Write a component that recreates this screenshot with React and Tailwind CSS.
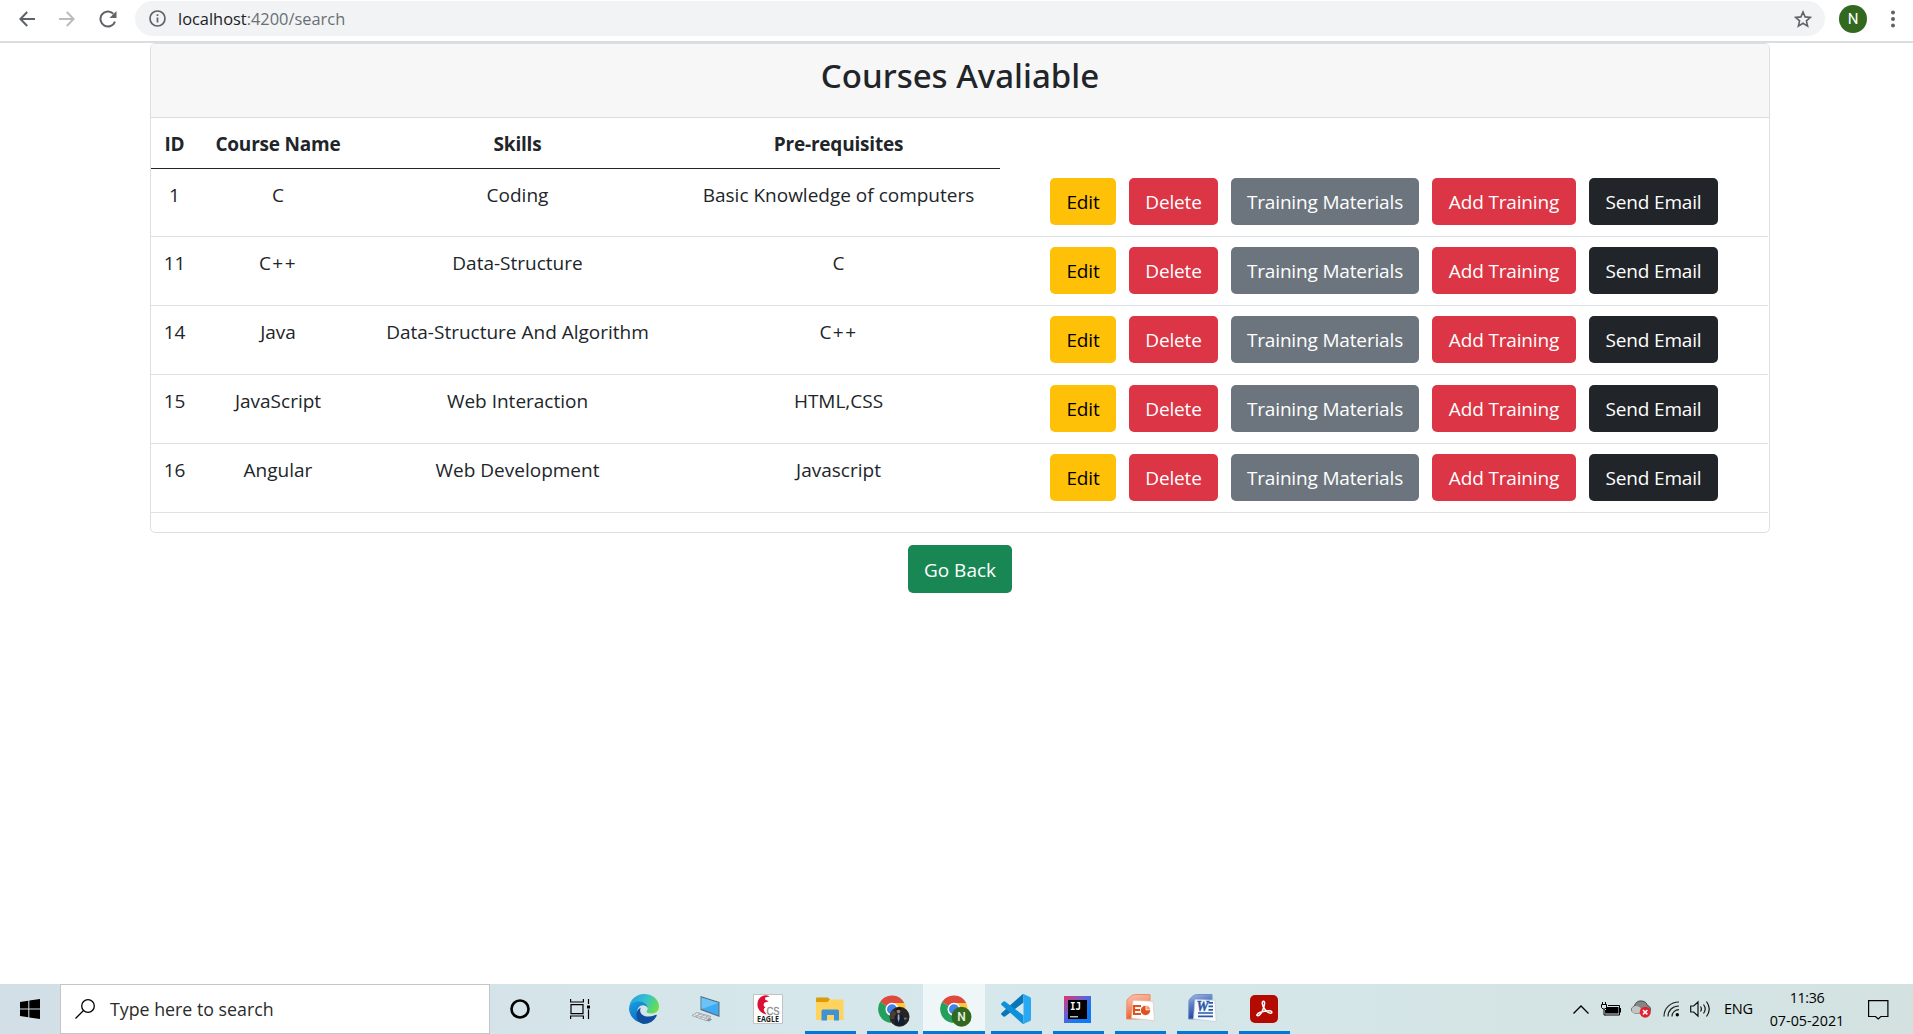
import React from "react";

const courses = [
  { id: 1, name: "C", skills: "Coding", pre: "Basic Knowledge of computers" },
  { id: 11, name: "C++", skills: "Data-Structure", pre: "C" },
  { id: 14, name: "Java", skills: "Data-Structure And Algorithm", pre: "C++" },
  { id: 15, name: "JavaScript", skills: "Web Interaction", pre: "HTML,CSS" },
  { id: 16, name: "Angular", skills: "Web Development", pre: "Javascript" },
];

const actions = [
  { label: "Edit", cls: "w-[66px] bg-[#ffc107] text-black" },
  { label: "Delete", cls: "w-[89px] bg-[#dc3545] text-white" },
  { label: "Training Materials", cls: "w-[188px] bg-[#6c757d] text-white" },
  { label: "Add Training", cls: "w-[144px] bg-[#dc3545] text-white" },
  { label: "Send Email", cls: "w-[129px] bg-[#212529] text-white" },
];

function BrowserBar() {
  return (
    <header className="flex h-[43px] shrink-0 items-start border-b-2 border-[#dadce0] bg-white pt-px">
      <div className="flex h-[35px] w-[135px] items-center text-[#5f6368]">
        <svg className="ml-[19px] h-4 w-4" viewBox="0 0 16 16" fill="none" stroke="currentColor" strokeWidth="2">
          <path d="M16 8H1.5M8.2 1 1.4 8l6.8 7" />
        </svg>
        <svg className="ml-6 h-4 w-4 text-[#babcbe]" viewBox="0 0 16 16" fill="none" stroke="currentColor" strokeWidth="2">
          <path d="M0 8h14.5M7.8 1l6.8 7-6.8 7" />
        </svg>
        <svg className="ml-6 h-[18px] w-[18px]" viewBox="0 0 18 18">
          <path d="M14.3 3.7A7.5 7.5 0 1 0 16 11.6" fill="none" stroke="currentColor" strokeWidth="2" />
          <path d="M17.5 1v7h-7z" fill="currentColor" />
        </svg>
      </div>
      <div className="flex h-[35px] w-[1690px] items-center rounded-full bg-[#f1f3f4]">
        <svg className="ml-[14px] h-[17px] w-[17px]" viewBox="0 0 17 17" fill="none" stroke="#5f6368" strokeWidth="1.7">
          <circle cx="8.5" cy="8.5" r="7.5" />
          <path d="M8.5 7.5v5M8.5 4.3v1.8" />
        </svg>
        <span className="ml-3 grow pt-px text-[16.4px] text-[#202124]">
          localhost<span className="text-[#6b6f73]">:4200/search</span>
        </span>
        <svg className="mr-[13px] h-[18px] w-[18px]" viewBox="0 0 18 18" fill="none" stroke="#5f6368" strokeWidth="1.6">
          <path d="m9 2 2.1 4.9 5.3.5-4 3.5 1.2 5.2L9 13.3l-4.600 2.800 1.200-5.200-4-3.500 5.300-.5z" />
        </svg>
      </div>
      <div className="ml-[14px] mt-1 flex h-7 w-7 items-center justify-center rounded-full bg-[#33691e] font-['Roboto'] text-[15px] text-white">
        N
      </div>
      <svg className="ml-[24px] mt-[9px] h-[18px] w-1" viewBox="0 0 4 18" fill="#5f6368">
        <circle cx="2" cy="2.500" r="2" />
        <circle cx="2" cy="9" r="2" />
        <circle cx="2" cy="15.500" r="2" />
      </svg>
    </header>
  );
}

function CourseTable() {
  const head = "h-[51px] border-b border-[#212529] pt-[11px] align-top font-bold leading-[30px] tracking-[-0.2px]";
  const cell = "border-b border-[#dee2e6] pt-[11px] align-top leading-[30px]";
  return (
    <table className="w-[1617px] table-fixed border-separate border-spacing-0 text-center text-[19px] text-[#212529]">
      <colgroup>
        <col className="w-[47px]" />
        <col className="w-[160px]" />
        <col className="w-[319px]" />
        <col className="w-[323px]" />
        <col className="w-[768px]" />
      </colgroup>
      <thead>
        <tr>
          <th className={head}>ID</th>
          <th className={head}>Course Name</th>
          <th className={head}>Skills</th>
          <th className={head}>Pre-requisites</th>
          <td />
        </tr>
      </thead>
      <tbody>
        {courses.map((c) => (
          <tr key={c.id} className="h-[69px] first:h-[68px]">
            <td className={cell}>{c.id}</td>
            <td className={`${cell} ${c.name === "C++" ? "tracking-[1.500px]" : ""}`}>{c.name}</td>
            <td className={cell}>{c.skills}</td>
            <td className={`${cell} ${c.pre === "C++" ? "tracking-[1.500px]" : ""}`}>{c.pre}</td>
            <td className="border-b border-[#dee2e6] pb-[2px]">
              <div className="flex gap-[13px] pl-[50px]">
                {actions.map((a) => (
                  <button
                    key={a.label}
                    className={`h-[47px] whitespace-nowrap rounded-[5px] pt-[2px] tracking-[-0.16px] ${a.cls}`}
                  >
                    {a.label}
                  </button>
                ))}
              </div>
            </td>
          </tr>
        ))}
      </tbody>
    </table>
  );
}

function StartIcon() {
  return (
    <svg className="h-5 w-5" viewBox="0 0 20 20">
      <path d="M0 3l8.300-1.200v7.700H0zM9.300 1.600 20 0v9.500H9.300zM0 10.500h8.300v7.700L0 17zM9.300 10.500H20V20L9.300 18.400z" />
    </svg>
  );
}

function CortanaIcon() {
  return (
    <svg className="h-5 w-5" viewBox="0 0 20 20" fill="none" stroke="#000" strokeWidth="2.600">
      <circle cx="10" cy="10" r="8.500" />
    </svg>
  );
}

function TaskViewIcon() {
  return (
    <svg className="mr-1 h-5 w-5" viewBox="0 0 20 20" fill="none" stroke="#000" strokeWidth="1.200">
      <path d="M1 5.600h12v9H1zM.6 0v3h12.800V0M.6 20v-3h12.800v3M18.500 0v5M18.500 10.500V20" />
      <path d="M17 6.500h3v3h-3z" fill="#000" stroke="none" />
    </svg>
  );
}

function EdgeIcon() {
  return (
    <svg className="h-[30px] w-[30px]" viewBox="0 0 30 30">
      <defs>
        <linearGradient id="edgeTop" x1="0" y1=".2" x2="1" y2=".6">
          <stop offset="0" stopColor="#249fdc" />
          <stop offset=".5" stopColor="#35c1d0" />
          <stop offset="1" stopColor="#6be046" />
        </linearGradient>
        <linearGradient id="edgeLeft" x1="0" y1="0" x2=".6" y2="1">
          <stop offset="0" stopColor="#1b9de2" />
          <stop offset="1" stopColor="#0c6bc0" />
        </linearGradient>
      </defs>
      <path d="M.3 13C1 5.500 7.500 0 15 0c9 0 15 6 15 12.500 0 4.500-3.500 7-7.500 7-3.500 0-5-1-5-2 0-.7 1.200-1.300 1.200-3.500 0-3-3.200-5.800-7.700-5.800C5.500 8.200 2 10.500.3 13z" fill="url(#edgeTop)" />
      <path d="M0 15c0-5 4.500-7.500 9.500-7.500 5.800 0 9.200 3.200 9.200 6.500-1.200-2-3-2.700-4.700-2.700-3.500 0-5.800 3-5.800 6.700 0 6 5 10.500 11.300 10.300A15 15 0 0 1 0 15z" fill="url(#edgeLeft)" />
      <path d="M12.200 13.500c-2 2-1.900 9 7.300 9 4 0 6.500-1.800 7.700-1.800.6 0 .8.600.4 1.200C25 27 20 30 15 30c-4.500 0-8-5-7.500-10 .3-3.300 2-5.600 4.700-6.500z" fill="#0f4f9e" />
    </svg>
  );
}

function PcIcon() {
  return (
    <svg className="h-[28px] w-[28px]" viewBox="0 0 28 28">
      <path d="M8.500 1 27.500 7v15L8.500 15z" fill="#5b6b78" />
      <path d="M9.500 2.500 26.500 8v12.500L9.500 14z" fill="#3daaf2" />
      <path d="M9.500 2.500 26.500 8 9.500 14z" fill="#6cc3f8" />
      <path d="M0 20.500 5 17.500l14 4-5 4z" fill="#f0f2f3" stroke="#8b959b" strokeWidth=".8" />
      <path d="m3 20 12 3.500M5.500 18.800l11.500 3.300M4 22l4-3M8 23.300l4-3M12 24.500l4-3" stroke="#9aa3a8" strokeWidth=".8" />
      <path d="m14 25.500 3 1 3-2-2-1.500z" fill="#8b959b" />
    </svg>
  );
}

function EagleIcon() {
  return (
    <svg className="h-[30px] w-[30px]" viewBox="0 0 30 30">
      <path d="M.5.5h29v29H.5z" fill="#fff" stroke="#c3c3c3" />
      <path d="M13.500 20.500C7 19 4 14.500 4.500 9.500 5 4.500 8.500 1.500 13 1.300c2 0 3 .7 3.500 1.700-3-.5-4.500.5-4.500 1.800 0 1.700 3 1.500 3.500 3-2.500-.3-4.500.7-4.800 2.500-.3 1.600.7 2.700 2 3.200-2 .5-2.500 2.500-1 4.500.7 1 1.500 1.800 1.800 2.500z" fill="#dc0f36" />
      <text x="13.500" y="20.500" fontFamily="Liberation Sans" fontSize="11" fill="#8b8b8b" stroke="#8b8b8b" strokeWidth=".3" textLength="13" lengthAdjust="spacingAndGlyphs">CS</text>
      <text x="4" y="28.300" fontFamily="Open Sans" fontWeight="700" fontSize="8.500" fill="#222" textLength="22" lengthAdjust="spacingAndGlyphs">EAGLE</text>
    </svg>
  );
}

function FolderIcon() {
  return (
    <svg className="h-6 w-7" viewBox="0 0 28 24">
      <path d="M0 1.500Q0 .5 1 .5h11l2 2-2 3H0z" fill="#dd9a0a" />
      <path d="M0 5h11.500l2.500-2.500h13q.500 0 .5.700v19q0 .800-.800.800H.8q-.8 0-.8-.8z" fill="#ffd35c" />
      <path d="M5.500 23.500V14q0-1.500 1.500-1.500h14.500q1.500 0 1.500 1.500v9.500h-5V18h-7v5.500z" fill="#3d93d6" />
    </svg>
  );
}

function ChromeIcon({ children }) {
  return (
    <svg className="ml-1 mt-[3px] h-8 w-8" viewBox="0 0 32 32">
      <path d="M14 14 2 7A14 14 0 0 1 26.300 8H14z" fill="#de4a3e" />
      <path d="M14 14 2 7a14 14 0 0 0 11 21l6-10z" fill="#23a05b" />
      <path d="M14 8h12.300A14 14 0 0 1 13 28l7-12z" fill="#fdc93a" />
      <circle cx="14" cy="14.300" r="6.500" fill="#fff" />
      <circle cx="14" cy="14.300" r="5" fill="#4083ec" />
      {children}
    </svg>
  );
}

function ChromePhotoIcon() {
  return (
    <ChromeIcon>
      <circle cx="21.500" cy="21.700" r="10" fill="#262626" />
      <path d="M12 24a10 10 0 0 1 3-9l3 3-1 6z" fill="#4c3d31" />
      <path d="M16.500 21q4-3.500 8.500 0l2 8q-5 3-10 0z" fill="#151c2a" />
      <ellipse cx="20.500" cy="16" rx="1.900" ry="2.400" fill="#a07c66" />
      <path d="M18.300 15.500q0-3 2.400-3t2.300 3q-2.300-1.500-4.700 0z" fill="#15110f" />
      <path d="m19.800 19.500 1.600 0 .2 4-.9 4-1.200-4z" fill="#8ea6c8" />
      <path d="m25.500 22.500 4 .5-2.500 2z" fill="#77797b" />
    </ChromeIcon>
  );
}

function ChromeNIcon() {
  return (
    <ChromeIcon>
      <circle cx="21.500" cy="21.700" r="10" fill="#33691e" />
      <text x="21.500" y="26" textAnchor="middle" fontFamily="Roboto" fontWeight="500" fontSize="12" fill="#e9f2e4">N</text>
    </ChromeIcon>
  );
}

function VsCodeIcon() {
  return (
    <svg className="h-[30px] w-[30px]" viewBox="0 0 30 30">
      <path d="M22.500 0v8.500L4 22.500q-.8.600-1.500 0L.5 20.700q-.8-.8 0-1.600L21 .7z" fill="#0877b9" />
      <path d="M22.500 30v-8.500L4 7.500q-.8-.6-1.500 0L.5 9.300q-.8.800 0 1.600L21 29.300z" fill="#0e90da" />
      <path d="M22.500 0 29 3q1 .5 1 1.600v20.800q0 1.100-1 1.600l-6.500 3q-1 0-1.800-.8 1.800.4 1.800-1.500V2.300q0-1.900-1.800-1.500.8-.8 1.800-.8z" fill="#2aa9f3" />
    </svg>
  );
}

function IntelliJIcon() {
  return (
    <svg className="mr-px h-[27px] w-[27px]" viewBox="0 0 27 27">
      <defs>
        <linearGradient id="ij" x1="0" y1="0" x2="1" y2="1">
          <stop offset="0" stopColor="#e8316f" />
          <stop offset=".4" stopColor="#6a5fd0" />
          <stop offset=".65" stopColor="#1878f5" />
          <stop offset="1" stopColor="#087cfa" />
        </linearGradient>
      </defs>
      <path d="M0 0h27v27H0z" fill="url(#ij)" />
      <path d="M4 4h19v19H4z" />
      <path d="M6 20h8v1.500H6z" fill="#bbb" />
      <text x="6" y="13.500" fontFamily="DejaVu Sans Mono" fontWeight="700" fontSize="10" fill="#fff" textLength="11" lengthAdjust="spacingAndGlyphs">IJ</text>
    </svg>
  );
}

function PowerPointIcon() {
  return (
    <svg className="h-[30px] w-[30px]" viewBox="0 0 30 30">
      <defs>
        <linearGradient id="ppt" x1="0" y1="0" x2=".3" y2="1">
          <stop offset="0" stopColor="#fcc3ab" />
          <stop offset=".4" stopColor="#f6a284" />
          <stop offset="1" stopColor="#ea5a24" />
        </linearGradient>
      </defs>
      <path d="M2 6.500C5 1.500 8 .5 12 .5h13v24.500H1.500z" fill="url(#ppt)" stroke="#f08a62" />
      <path d="m8 6.500 20 .7 1.500 19.500-23-2.500z" fill="#fff" stroke="#dcc7c0" strokeWidth=".7" />
      <path d="M9 12h7M9 16h6M9 20h7M9 10.900v10.200" stroke="#e4501c" strokeWidth="2.200" />
      <circle cx="20.500" cy="16.500" r="4.700" fill="#e4501c" />
      <path d="M21 16V11.200a5 5 0 0 1 4.700 4.400z" fill="#f0916f" stroke="#fff" strokeWidth=".8" />
    </svg>
  );
}

function WordIcon() {
  return (
    <svg className="h-[30px] w-[30px]" viewBox="0 0 30 30">
      <defs>
        <linearGradient id="word" x1="0" y1="0" x2=".3" y2="1">
          <stop offset="0" stopColor="#a9bee6" />
          <stop offset=".4" stopColor="#5e80c4" />
          <stop offset="1" stopColor="#1e4596" />
        </linearGradient>
      </defs>
      <path d="M2 6.500C5 1.500 8 .5 12 .5h13v24.500H1.500z" fill="url(#word)" stroke="#6f8fce" />
      <path d="m8 5.500 20 .7 1.200 21.500L6.500 25z" fill="#f7faff" stroke="#c2cbdc" strokeWidth=".7" />
      <path d="M21.500 8.800H26M21.500 12.300H26M21.500 15.800H26M11 19h15M11 22.300h15" stroke="#2b57a8" strokeWidth="1.700" />
      <text x="9.500" y="16.500" fontFamily="Liberation Serif" fontStyle="italic" fontWeight="700" fontSize="14" fill="#2b57a8" stroke="#2b57a8" strokeWidth=".4" textLength="12" lengthAdjust="spacingAndGlyphs">W</text>
    </svg>
  );
}

function AcrobatIcon() {
  return (
    <svg className="h-7 w-7" viewBox="0 0 28 28">
      <rect width="28" height="28" rx="5" fill="#b30b00" />
      <path
        d="M13.500 6.200c1.600 0 1.200 3.300.2 6.300-1.200 3.400-3.600 8.300-5.800 8.300-1.900 0-1.200-2.200 2.300-3.500 3-1.100 6.600-1.700 8.900-1.600 3.800.2 3.200 2.700 1.200 2.500-3-.2-7.800-5.800-8-9.500-.1-1.700.4-2.500 1.200-2.500z"
        fill="none" stroke="#fff" strokeWidth="1.500"
      />
    </svg>
  );
}

const launchers = [CortanaIcon, TaskViewIcon, EdgeIcon, PcIcon, EagleIcon];
const windows = [FolderIcon, ChromePhotoIcon, ChromeNIcon, VsCodeIcon, IntelliJIcon, PowerPointIcon, WordIcon, AcrobatIcon];

function Tray() {
  return (
    <div className="ml-auto flex h-full items-center">
      <svg className="h-[9px] w-4" viewBox="0 0 16 9" fill="none" stroke="#000" strokeWidth="1.300">
        <path d="m.5 8.500 7.500-7.500 7.500 7.500" />
      </svg>
      <svg className="ml-3 h-[14px] w-5" viewBox="0 0 20 14">
        <path d="M5 5h12.500v6.500H5z" />
        <path d="M4.500 8v5H18.500V3.500H7M19.500 6v4.500" fill="none" stroke="#000" />
        <path d="M.5 2.500h5v3L4 7H2L.5 5.500zM1.500 0v3M4.500 0v3M3 7v6h2" fill="#d6e7ec" stroke="#000" />
      </svg>
      <svg className="ml-[10px] h-[18px] w-5" viewBox="0 0 20 18">
        <path d="M4 13C-.5 12.500-.5 7 3.500 6.200 4 2 8 .5 11 1c3 .3 5 2.300 5.300 4.500C20 6 20.500 11 17.500 13z" fill="#858585" stroke="#3d3d3d" strokeWidth=".9" />
        <path d="M4 13C-.3 12.500-.3 7.200 3.500 6.200c3-.8 5 .3 6.500 2.300l3 4.500z" fill="#c4c4c4" />
        <circle cx="14.200" cy="12.200" r="5.500" fill="#e0242f" />
        <path d="m12 10 4.400 4.400M16.400 10 12 14.400" stroke="#fff" strokeWidth="1.500" />
      </svg>
      <svg className="ml-3 h-4 w-[17px]" viewBox="0 0 17 16" fill="none" stroke="#222" strokeWidth="1.200">
        <path d="M1 15.500C1 7 7.500 1 16 1M5 15.500C5 9.500 9.500 5 16 5M9 15.500c0-4 3-6.800 7-6.800" />
        <circle cx="14.300" cy="13.800" r="1.700" fill="#000" stroke="none" />
      </svg>
      <svg className="ml-[10px] h-[18px] w-[21px]" viewBox="0 0 21 18" fill="none" stroke="#111" strokeWidth="1.200">
        <path d="M.7 6h3L8 2v14l-4.300-4h-3zM10.500 6.500q1.800 2.500 0 5M13.500 4.500q3.400 4.500 0 9M16.500 1.500q5.500 7.500 0 15" />
      </svg>
      <span className="ml-[13px] w-7 text-[14.600px] tracking-[-0.3px]">ENG</span>
      <div className="ml-[16px] w-[78px] text-center text-[14.300px] leading-[23px]">
        <div className="tracking-[-0.4px]">11:36</div>
        <div>07-05-2021</div>
      </div>
      <svg className="ml-[22px] mr-[24px] mt-px h-5 w-[21px]" viewBox="0 0 21 20" fill="none" stroke="#000" strokeWidth="1.200">
        <path d="M.6.6h19.300v15.900h-7L10.200 19l-2.700-2.500H.6z" />
      </svg>
    </div>
  );
}

function Taskbar() {
  return (
    <footer className="flex h-[50px] shrink-0 items-center bg-linear-to-r from-[#d2dfe6] via-[#d6e8ec] to-[#d3e2e1] text-black">
      <div className="flex w-[60px] justify-center">
        <StartIcon />
      </div>
      <div className="flex h-[50px] w-[430px] items-center border border-[#c5c5c5] bg-white">
        <svg className="ml-[14px] h-5 w-5" viewBox="0 0 20 20" fill="none" stroke="#000" strokeWidth="1.300">
          <circle cx="13" cy="7" r="6.300" />
          <path d="M8.500 11.500.5 19.500" />
        </svg>
        <span className="ml-[15px] text-[17.800px] text-[#2b2b2b]">Type here to search</span>
      </div>
      <div className="-ml-px flex h-full">
        {launchers.map((Icon, i) => (
          <div key={i} className="flex h-full w-[62px] items-center justify-center">
            <Icon />
          </div>
        ))}
        {windows.map((Icon, i) => (
          <div key={i} className={`flex h-full w-[62px] flex-col items-center ${i === 2 ? "bg-[#eff6f8]" : ""}`}>
            <div className="flex h-[47px] items-center pt-[3px]">
              <Icon />
            </div>
            <div className={`h-[3px] bg-[#0078d7] ${i === 2 ? "w-full" : "w-[51px]"}`} />
          </div>
        ))}
      </div>
      <Tray />
    </footer>
  );
}

export default function App() {
  return (
    <div className="flex h-[1034px] w-[1913px] flex-col overflow-hidden bg-white font-['Open_Sans','Noto_Sans',sans-serif]">
      <BrowserBar />
      <main className="flex grow flex-col items-center pl-[7px]">
        <section className="h-[490px] w-[1620px] overflow-hidden rounded-[5px] border border-[#dfdfdf]">
          <h3 className="h-[74px] border-b border-[#dbdbdb] bg-[#f7f7f7] pt-[11px] text-center font-['Noto_Sans',sans-serif] text-[33px] leading-[42px] font-medium text-[#212529]">
            Courses Avaliable
          </h3>
          <CourseTable />
        </section>
        <button className="mt-3 h-12 w-[104px] rounded-[5px] bg-[#198754] pt-[2px] text-[19px] text-white">Go Back</button>
      </main>
      <Taskbar />
    </div>
  );
}
